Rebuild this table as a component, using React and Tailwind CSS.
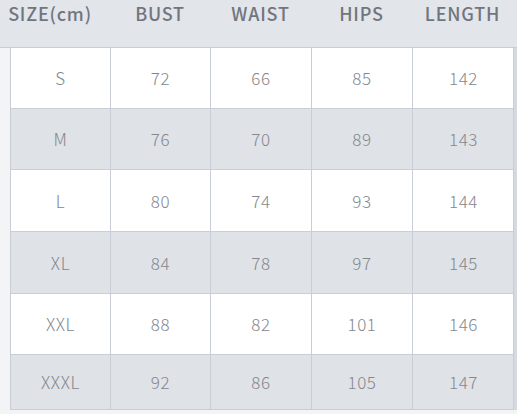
import React from 'react';

const headers = ['SIZE(cm)', 'BUST', 'WAIST', 'HIPS', 'LENGTH'];

const rows = [
  { size: 'S', vals: [72, 66, 85, 142], h: 'h-[61px]' },
  { size: 'M', vals: [76, 70, 89, 143], h: 'h-[61px]' },
  { size: 'L', vals: [80, 74, 93, 144], h: 'h-[62px]' },
  { size: 'XL', vals: [84, 78, 97, 145], h: 'h-[62px]' },
  { size: 'XXL', vals: [88, 82, 101, 146], h: 'h-[61px]' },
  { size: 'XXXL', vals: [92, 86, 105, 147], h: 'h-[55px]' },
];

const cols = 'grid grid-cols-[100px_100px_101px_101px_101px]';

const App = () => {
  return (
    <div className="w-[517px] h-[414px] overflow-hidden bg-[#f3f4f6] font-['Noto_Sans_CJK_SC','Noto_Sans',sans-serif]">
      {/* header */}
      <div className="h-[48px] bg-[#e2e5ea] border-b border-[#c9cdd5] pl-[10px]">
        <div className={`${cols} h-full`}>
          {headers.map((h, i) => (
            <div
              key={h}
              className={`flex justify-center whitespace-nowrap text-[18px] leading-[26px] font-medium text-[#71757e] tracking-[0.8px] ${i === 0 ? '-ml-[20px]' : ''}`}
            >
              {h}
            </div>
          ))}
        </div>
      </div>

      {/* body */}
      <div className="flex">
        <div className="w-[10px]" />
        <div className="border-l border-r border-[#c9cdd5] w-[504px]">
          {rows.map((r, ri) => (
            <div
              key={r.size}
              className={`${cols} ${r.h} border-b border-[#c9cdd5] ${ri % 2 === 0 ? 'bg-white' : 'bg-[#dfe2e7]'}`}
            >
              {[r.size, ...r.vals].map((v, ci) => (
                <div
                  key={ci}
                  className={`flex items-center justify-center text-[17px] tracking-[0.6px] font-light text-[#84878e] ${ci < 4 ? 'border-r border-[#c9cdd5]' : ''}`}
                >
                  {v}
                </div>
              ))}
            </div>
          ))}
        </div>
        <div className="w-[3px] h-[362px] bg-[#d6dae0]" />
      </div>
    </div>
  );
};

export default App;
